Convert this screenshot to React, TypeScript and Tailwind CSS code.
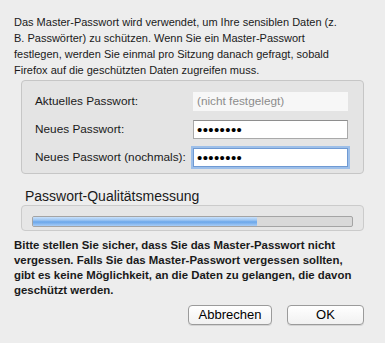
export default function App() {
  const font = { fontFamily: '"Liberation Sans", Arial, sans-serif' }
  return (
    <div className="w-[385px] h-[343px] bg-[#ededed] text-[#1a1a1a] font-['Liberation_Sans',Arial,sans-serif] overflow-hidden">
      <p className="pt-[14px] pl-[14px] text-[11px] leading-[16px] whitespace-nowrap">
        Das Master-Passwort wird verwendet, um Ihre sensiblen Daten (z.
        <br />
        B. Passwörter) zu schützen. Wenn Sie ein Master-Passwort
        <br />
        festlegen, werden Sie einmal pro Sitzung danach gefragt, sobald
        <br />
        Firefox auf die geschützten Daten zugreifen muss.
      </p>

      <div className="mt-[2px] ml-[21px] w-[343px] h-[94px] rounded-[4px] border border-[#c6c6c6] bg-[#e4e4e4] pt-[11px] pl-[13px] flex flex-col gap-[9px]">
        <div className="flex items-center h-[19px]">
          <span className="w-[158px] text-[11.8px]">Aktuelles Passwort:</span>
          <div className="w-[155px] h-[19px] bg-[#f7f7f7] flex items-center pl-[4px] text-[11.8px] text-[#8c8c8c]">
            (nicht festgelegt)
          </div>
        </div>
        <div className="flex items-center h-[19px]">
          <span className="w-[158px] text-[11.8px]">Neues Passwort:</span>
          <div className="w-[155px] h-[19px] bg-white border border-[#a9a9a9] border-t-[#8e8e8e] flex items-center pl-[3px] text-[15px] leading-[17px] tracking-[0.4px] text-black">
            ••••••••
          </div>
        </div>
        <div className="flex items-center h-[19px]">
          <span className="w-[158px] text-[11.8px]">Neues Passwort (nochmals):</span>
          <div className="w-[155px] h-[19px] bg-white border border-[#6f9ad3] shadow-[0_0_0_2px_#9dbfe9] flex items-center pl-[3px] text-[15px] leading-[17px] tracking-[0.4px] text-black">
            ••••••••
          </div>
        </div>
      </div>

      <div className="mt-[13px] pl-[25px] h-[18px] text-[14px] leading-[18px]" style={font}>
        Passwort-Qualitätsmessung
      </div>
      <div className="ml-[21px] w-[343px] h-[26px] rounded-[4px] border border-[#cbcbcb] bg-[#e6e6e6] pt-[10px] pl-[10px]">
        <div className="w-[321px] h-[11px] rounded-[2px] border border-[#a4a4a4] bg-[#d9d9d9] overflow-hidden">
          <div className="w-[224px] h-full bg-[linear-gradient(to_bottom,#c9e1fb_0%,#9cc5f2_35%,#6aa6ea_55%,#a9cdf6_100%)]" />
        </div>
      </div>

      <p className="mt-[7px] pl-[14px] text-[11.4px] leading-[15px] font-bold whitespace-nowrap">
        Bitte stellen Sie sicher, dass Sie das Master-Passwort nicht
        <br />
        vergessen. Falls Sie das Master-Passwort vergessen sollten,
        <br />
        gibt es keine Möglichkeit, an die Daten zu gelangen, die davon
        <br />
        geschützt werden.
      </p>

      <div className="mt-[7px] pr-[21px] flex justify-end gap-[15px]">
        <button className="w-[84px] h-[20px] rounded-[4px] border border-[#9b9b9b] bg-[linear-gradient(to_bottom,#ffffff,#f1f1f1)] shadow-[0_1px_0_#d4d4d4] text-[13px] leading-[18px] text-black">
          Abbrechen
        </button>
        <button className="w-[77px] h-[20px] rounded-[4px] border border-[#9b9b9b] bg-[linear-gradient(to_bottom,#ffffff,#f1f1f1)] shadow-[0_1px_0_#d4d4d4] text-[13px] leading-[18px] text-black">
          OK
        </button>
      </div>
    </div>
  )
}
